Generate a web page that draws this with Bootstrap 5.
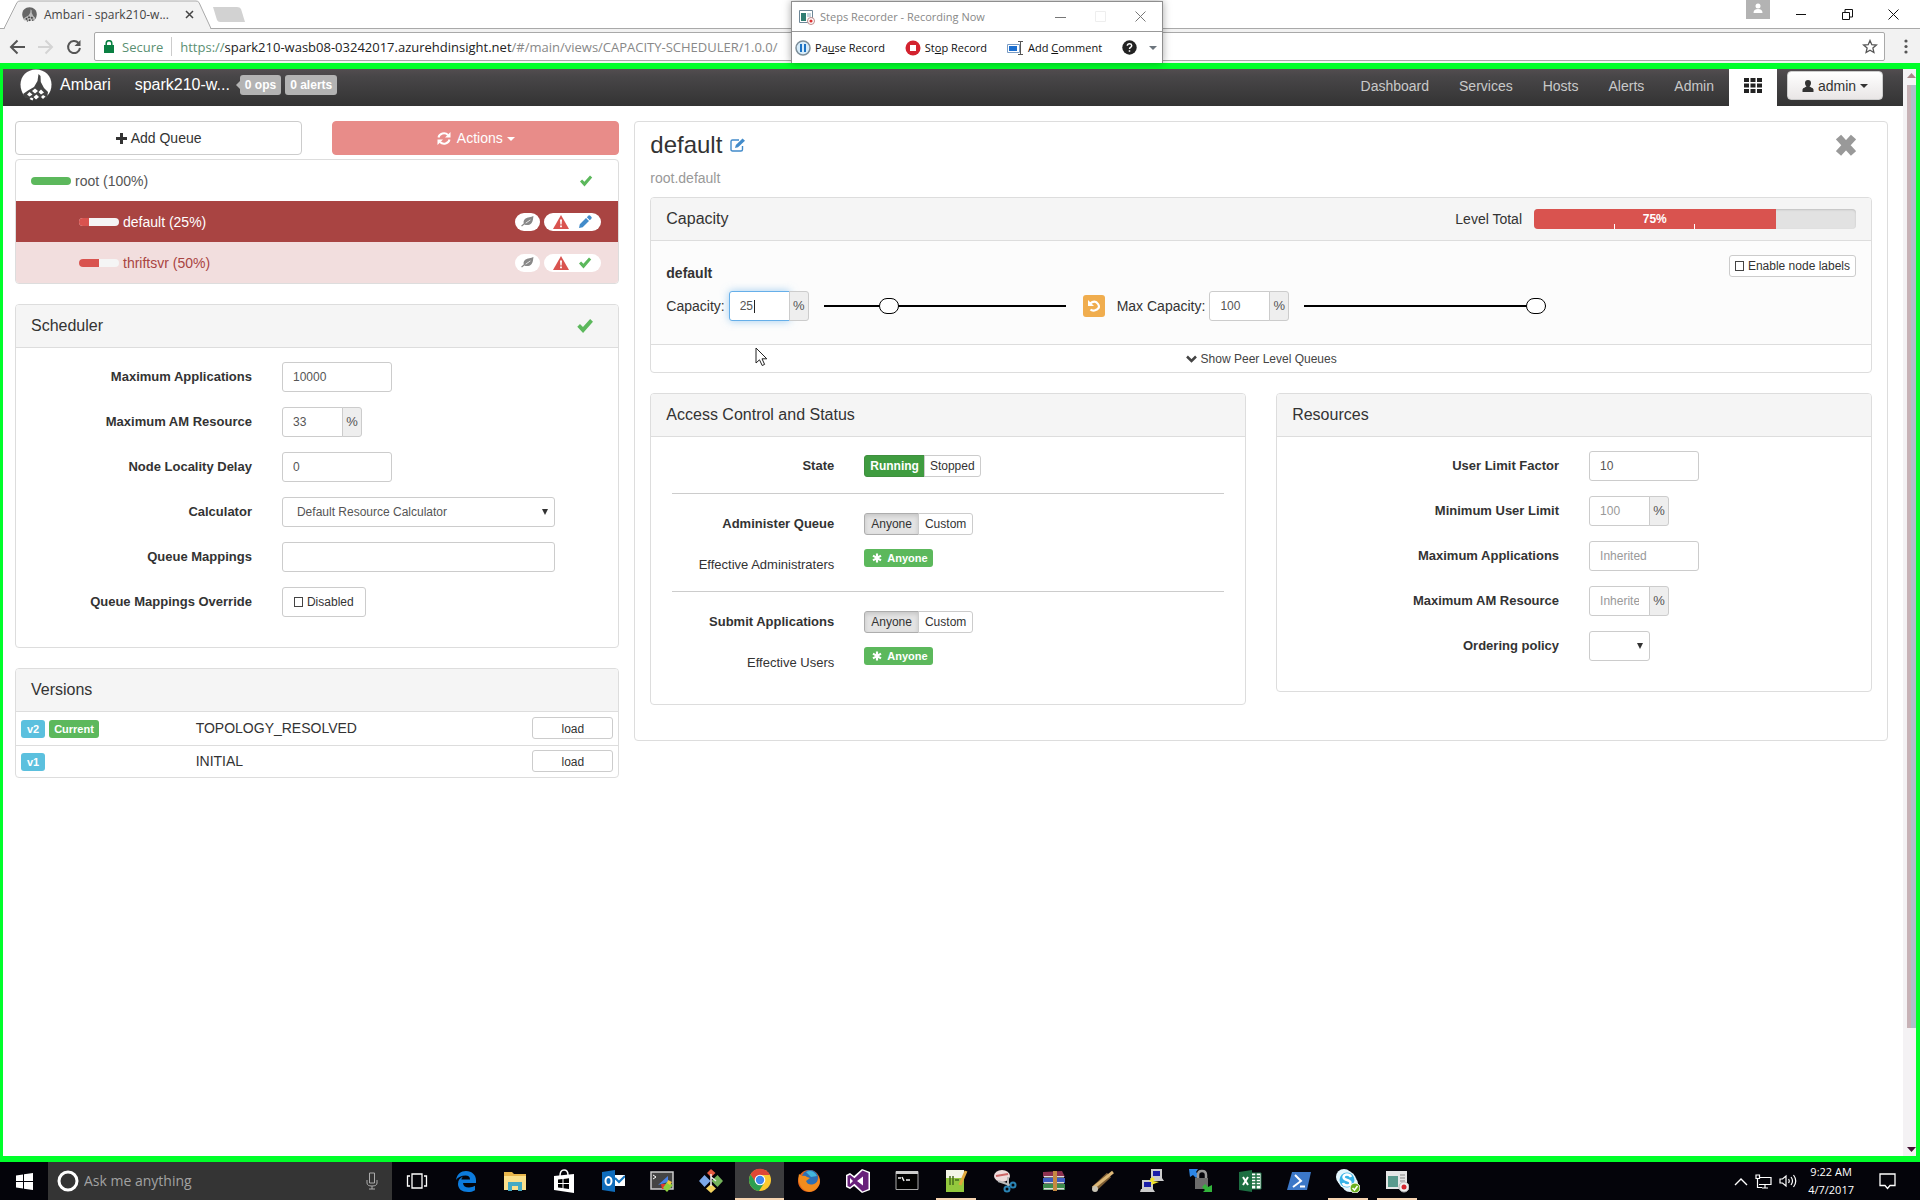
<!DOCTYPE html>
<html lang="en">
<head>
<meta charset="utf-8">
<meta name="viewport" content="width=device-width, initial-scale=1">
<title>Ambari - Capacity Scheduler</title>
<link href="https://cdn.jsdelivr.net/npm/bootstrap@5.3.0/dist/css/bootstrap.min.css" rel="stylesheet">
<style>
body{font-family:"Liberation Sans",Arial,sans-serif;font-size:14px;line-height:20px;color:#333;background:#fff}
button,input,select{font-family:inherit}
.ui-font{font-family:"Open Sans","Noto Sans",sans-serif}
svg{display:block;flex:none}
.ic{width:14px;height:14px;fill:currentColor}
/* browser chrome */
.tabstrip{height:29px;border-bottom:1px solid #a9a9a9;background:#fff}
.tab-one{width:212px;height:29px;margin-bottom:-1px;padding:0 18px 0 22px;gap:7px;font-size:12px;color:#444}
.tab-shape{position:absolute;inset:0;z-index:0}
.tab-one>*:not(.tab-shape){position:relative}
.plain{border:0;background:none;padding:0;color:inherit;display:flex;align-items:center;justify-content:center}
.winbtn{width:46px;height:28px;color:#111}
.toolbar{height:34px;background:#f2f2f2;padding:3px 8px 2px 9px;gap:11px}
.omni{height:29px;border:1px solid #a9a9a9;background:#fff;padding:0 6px 0 9px;gap:8px;border-radius:2px}
.url-txt{font-size:13px;color:#888;white-space:nowrap}
.url-txt b{font-weight:400;color:#222}
.url-txt i{font-style:normal;color:#5a8f72}
.recorder{position:absolute;top:1px;left:41.2%;width:372px;height:62px;background:#fff;border:1px solid #8e8e8e;border-bottom:0;box-shadow:0 0 8px rgba(0,0,0,.35);z-index:10;font-size:11px}
.rec-title{height:30px;border-bottom:1px solid #999;color:#888;padding:0 8px 0 7px;gap:5px}
.rec-tools{height:31px;padding:0 5px 0 3px;color:#111}
.rec-tools .plain{gap:4px}
/* recorded area */
.frame-live{border:solid #00ff2a;border-width:6px 4px 6px 3px;flex:1 1 auto}
.sbar{width:13px;background:#f4f2f4;padding:4px 0}
.sthumb{flex:0 1 943px;margin:7px 0 0 4px;width:9px;background:linear-gradient(90deg,#c7b2b6 0 40%,#aebfca 40% 100%)}
/* page nav */
.topnav{height:37px;background:linear-gradient(#534d50,#484648 20%,#333);color:#fff;padding:0 20px 0 17px}
.brand-txt{font-size:16px;color:#fff;text-decoration:none}
.tagx{height:20px;line-height:20px;padding:0 5px;border-radius:3px;background:#b3b3b3;color:#fff;font-weight:700;font-size:12px;text-decoration:none}
.tag-arrow{position:relative;margin-left:10px}
.tag-arrow::before{content:"";position:absolute;left:-4px;top:5px;border:solid transparent;border-width:5px 5px 5px 0;border-right-color:#b3b3b3}
.topnav .nav-link{padding:0 15px;color:#c9c9c9;line-height:34px}
.gridbox{width:48px;height:37px;background:#fff;color:#222}
.btn-admin{height:29px;width:96px;border-radius:4px;border:1px solid #ccc;background:linear-gradient(#fff,#e9e6e6);color:#333;gap:4px;margin:2px 0 0 10px}
.caretx{border:solid transparent;border-width:4px 4px 0;border-top-color:currentColor;display:inline-block}
/* layout */
.page-grid{display:grid;grid-template-columns:604fr 1253fr;gap:15px;padding:15px 15px 20px 12px;align-items:start}
.pair{gap:30px}
.btn-x{height:34px;border:1px solid #ccc;border-radius:4px;background:#fff;color:#333;display:flex;align-items:center;justify-content:center;gap:4px}
.btn-red{background:#e88c89;border-color:#e88c89;color:#fff;gap:6px}
.queues{border:1px solid #ddd;border-radius:4px;overflow:hidden;margin:4px 0 20px}
.queue{height:41px;padding:0 17px 0 15px;gap:4px;color:#555;text-decoration:none}
.queue+.queue{padding-left:63px}
.queue.q-sel{background:#a94442;color:#fff}
.queue.q-bad{background:#f2dede;color:#a94442}
.qbar{width:40px;height:8px;border-radius:4px;background:#f5f5f5;overflow:hidden}
.qbar span{display:block;height:100%;background:#d9534f}
.qbar .q-full{background:#5cb85c}
.pillx{height:18px;border-radius:9px;background:#fff;padding:0 9px;gap:9px}
.pill-one{padding:0 6px;color:#888}
.t-ok{color:#5cb85c}.t-bad{color:#d9534f}.t-blue{color:#428bca}
.panelx{border:1px solid #ddd;border-radius:4px;background:#fff}
.panelx+.panelx{margin-top:20px}
.phead{height:43px;background:#f5f5f5;border-bottom:1px solid #ddd;padding:0 15px;border-radius:3px 3px 0 0;display:flex;align-items:center}
.phead h2{font-size:16px;line-height:20px;margin:0;font-weight:400}
.pbody{padding:14px 0 15px}
.frow{margin-bottom:15px;min-height:30px;align-items:center}
.frow>:first-child{padding-right:15px;text-align:right;font-size:13px}
.frow>:last-child{padding:0 15px}
.bold-l{font-weight:700}
.fld{height:30px;border:1px solid #ccc;border-radius:3px;padding:0 10px;font-size:12px;color:#555;background:#fff;width:110px}
.fld::placeholder{color:#999;opacity:1}
.fld-sm{width:61px;border-radius:3px 0 0 3px}
.addon{height:30px;width:20px;margin-left:-1px;border:1px solid #ccc;border-radius:0 3px 3px 0;background:#eee;font-size:13px;color:#555;line-height:28px;text-align:center}
.fld-wide{width:85%}
select.fld{appearance:none;padding-left:14px;background:#fff url("data:image/svg+xml,%3Csvg xmlns='http://www.w3.org/2000/svg' width='6' height='6'%3E%3Cpath d='M0 0h6L3 6z' fill='%23333'/%3E%3C/svg%3E") no-repeat right 6px center}
.fld-pick{width:61px}
.chk{appearance:none;width:9px;height:10px;border:1px solid #444;margin:0;background:#fff}
.btn-chk{border:1px solid #ccc;border-radius:3px;background:#fff;font-size:12px;display:inline-flex;align-items:center;gap:4px;cursor:pointer;height:30px;padding:0 11px}
.chk-low{height:22px;padding:0 5px}
.btn-s{height:22px;padding:0 5px;margin:0 0 0 -1px;border:1px solid #ccc;background:#fff;color:#333;font-size:12px;line-height:20px}
.btn-s:first-child{border-radius:3px 0 0 3px;margin:0}
.btn-s:last-child{border-radius:0 3px 3px 0}
.s-on,.s-on+.btn-s{padding:0 6px}
.s-on{background:#e3e3e3;border-color:#adadad;box-shadow:inset 0 2px 4px rgba(0,0,0,.13)}
.s-run{background:#3f9c40;border-color:#3f8f3f;color:#fff;font-weight:700}
.lab{display:inline-flex;align-items:center;height:18px;border-radius:3px;color:#fff;font-weight:700;font-size:11px;padding:0 5px;gap:5px}
.lab-ok{background:#5cb85c}.lab-info{background:#5bc0de;padding:0 6px}
.ver-table{width:100%;border-collapse:collapse}
.ver-table td{height:33px;padding:0 5px}
.ver-table tr+tr td{border-top:1px solid #ddd;height:32px}
.ver-tag{width:29%}
.btn-load{width:81px;height:22px;border:1px solid #ccc;border-radius:3px;background:#fff;color:#333;font-size:12px;line-height:20px;display:inline-block;vertical-align:middle}
/* right side */
.detail{padding:10px 15px 35px}
.detail h1{font-size:24px;line-height:26px;margin:0;font-weight:400}
.sub-l{color:#999;margin:10px 0 9px}
.lvl{width:322px;height:20px;border-radius:4px;background:#e2e2e2;overflow:hidden;box-shadow:inset 0 1px 2px rgba(0,0,0,.15)}
.lvl-fill{height:100%;background:linear-gradient(#fff,#fff) 33.3% 100%/1px 5px no-repeat,linear-gradient(#fff,#fff) 66.6% 100%/1px 5px no-repeat,#d9534f;color:#fff;font-weight:700;font-size:12px;text-align:center}
.capbody{background:#fcfcfc;padding:14px 15px 23px}
.capfoot{height:28px;border-top:1px solid #ddd;font-size:12px;color:#444}
.capfoot .plain{gap:4px}
.cur-fld{position:relative}
.cur-fld input{border-color:#66afe9;box-shadow:0 0 8px rgba(102,175,233,.6)}
.cur-fld::after{content:"";position:absolute;left:25px;top:9px;width:1px;height:13px;background:#222}
.rng{appearance:none;width:242px;height:18px;background:none;margin:0 17px 0 15px}
.rng::-webkit-slider-runnable-track{height:2px;background:#000}
.rng::-webkit-slider-thumb{appearance:none;width:20px;height:16px;margin-top:-7px;border:1px solid #000;border-radius:8px;background:#fff}
.btn-undo{width:22px;height:22px;border-radius:3px;background:#f0ad4e;color:#fff}
.two{display:grid;grid-template-columns:1fr 1fr;gap:30px;margin-top:20px;align-items:start}
.two .panelx{margin:0}
.two hr{margin:12px 21px 15px;border:0;border-top:1px solid #ccc;opacity:1}
.acc .frow{margin-bottom:0}
.acc .eff{margin:10px 0 16px;min-height:26px;align-items:start}
.acc .eff>:first-child{padding-top:6px}
.mouse{position:absolute;left:104px;top:149px;z-index:5}
/* taskbar */
.taskbar{height:38px;background:#04040a;color:#fff}
.start{width:48px;height:38px}
.searchx{width:344px;height:38px;background:#343434;padding:0 14px 0 9px;gap:5px}
.searchx input{background:none;border:0;outline:0;color:#fff;font-size:14px;padding:0}
.searchx input::placeholder{color:#a2a2a2}
.tk{width:49px;height:38px;border:0;background:none;padding:0;display:flex;align-items:center;justify-content:center}
.tk svg{width:24px;height:24px}
.tk-act{background:#3c3c3e;border-bottom:2px solid #f5d3b0}
.tk-open{background:linear-gradient(#f5d3b0,#f5d3b0) 50% 100%/40px 2px no-repeat}
.tray{gap:7px}
.clock{font-size:11px;line-height:18px;text-align:center;margin:0 18px 0 4px}
</style>
</head>
<body class="d-flex flex-column min-vh-100 position-relative">
<svg width="0" height="0" class="position-absolute" aria-hidden="true">
<symbol id="ok" viewBox="0 0 14 14"><path d="M1 7.600 3.100 5.400 5.400 7.800 11 1.600 13.200 3.600 5.500 12.400z"/></symbol>
<symbol id="warn" viewBox="0 0 16 14"><path d="M8 0 16 14H0z"/><path fill="#fff" d="M7 4.500h2l-.4 5H7.400zM7.100 10.500h1.800v1.800H7.100z"/></symbol>
<symbol id="pencil" viewBox="0 0 14 14"><path d="M1 13 1.800 9.300 8 3 11 6 4.700 12.200zM8.800 2.200 10.500.5Q11.200 0 12 .6L13.500 2Q14 2.800 13.500 3.500L11.800 5.200z"/></symbol>
<symbol id="leaf" viewBox="0 0 14 12"><path d="M13.500 0C11 1.500 7 1 4.500 3 2.500 4.600 2.500 7 3 8L0 10.500l1 1L3.600 9.300C6 10.500 9.500 10 11.500 7.500 13.300 5 13 2.500 13.500 0zM4.800 7.600 10 3.800 10.400 4.300 5.200 8.100z" fill-rule="evenodd"/></symbol>
<symbol id="star6" viewBox="0 0 12 12"><g stroke="currentColor" stroke-width="2.600"><path d="M6 .5v11M1.200 3.200l9.600 5.600M10.800 3.200 1.200 8.800"/></g></symbol>
<symbol id="ambari" viewBox="0 0 32 32"><path d="M16 .5C25 .5 31.500 7 31.500 15.500 31.500 20 30 24 27.500 26.500L4 26.500C2 23.500.5 20 .5 15.500.5 7 7 .5 16 .5z"/><path fill="var(--cut,#444)" d="M18.500 5 20.500 7 20.800 13 24 19 28 23 27 29H5L3 25 8 21.500 14 18 17.500 12z"/><path fill="currentColor" d="M15 19.500l3 2.500-3 2.500-3-2.500zM21 20.500l3 3-3 2-2.500-2.500zM9.500 23l3 2.500-3 2L7 25.500zM16.500 25.500l2.500 2.500-3 2.500-2.500-2.500zM23 26l2.500 1.500L23 30l-2-2zM11 28.500l2.500 1-1 2-3-1.500z"/></symbol>
</svg>

<header class="ui-font">
  <div class="tabstrip d-flex align-items-center">
    <div class="tab-one d-flex align-items-center position-relative">
      <svg class="tab-shape" width="212" height="29"><path d="M4 28.500 17 2.500Q18 1 20 1H196Q198 1 199 2.500L211 28.500" fill="#f2f2f2" stroke="#a9a9a9"/><path d="M5 29H210" stroke="#f2f2f2" stroke-width="2"/></svg>
      <svg width="15" height="15" fill="#666" style="--cut:#bbb"><use href="#ambari"/></svg>
      <span class="flex-grow-1 text-nowrap">Ambari - spark210-w...</span>
      <button class="plain" aria-label="Close tab"><svg width="9" height="9" stroke="#444" stroke-width="1.500"><path d="M1 1l7 7M8 1l-7 7"/></svg></button>
    </div>
    <button class="plain" aria-label="New tab"><svg width="34" height="17"><path d="M1 1H25Q28 1 29 3L33 16H8Q6 16 5 14z" fill="#d2d2d2"/></svg></button>
    <div class="ms-auto d-flex align-items-start align-self-start pe-1">
      <span class="me-2"><svg width="24" height="19"><path fill="#b3b3b3" d="M0 0h24v19H0z"/><circle cx="12" cy="6" r="2.500" fill="#fff"/><path d="M7.500 13q0-4 4.500-4t4.500 4z" fill="#fff"/></svg></span>
      <button class="plain winbtn" aria-label="Minimize"><svg width="10" height="10" stroke="currentColor"><path d="M0 5.500h10"/></svg></button>
      <button class="plain winbtn" aria-label="Restore"><svg width="11" height="11" fill="none" stroke="currentColor"><path d="M.5 3.500h7v7h-7zM3 3V.500h7.500V8H8"/></svg></button>
      <button class="plain winbtn" aria-label="Close"><svg width="11" height="11" stroke="currentColor"><path d="M.5.5l10 10M10.500.5l-10 10"/></svg></button>
    </div>
  </div>
  <div class="toolbar d-flex align-items-center">
    <button class="plain" aria-label="Back"><svg width="17" height="16" fill="none" stroke="#555" stroke-width="2"><path d="M16 8H2M8.500 1.500 2 8l6.500 6.500"/></svg></button>
    <button class="plain" aria-label="Forward"><svg width="17" height="16" fill="none" stroke="#d4d4d4" stroke-width="2"><path d="M1 8h14M8.500 1.500 15 8l-6.500 6.500"/></svg></button>
    <button class="plain" aria-label="Reload"><svg width="18" height="16" fill="none" stroke="#555" stroke-width="2"><path d="M13.500 4A6 6 0 1 0 15 9"/><path d="M15.500 1v6h-6z" fill="#555" stroke="none"/></svg></button>
    <div class="omni d-flex align-items-center flex-grow-1">
      <svg width="10" height="13" fill="#0b8043"><path d="M0 5h10v8H0z"/><path d="M2.200 6V3.500a2.800 2.800 0 0 1 5.600 0V6" fill="none" stroke="#0b8043" stroke-width="1.500"/></svg>
      <span class="url-txt"><i>Secure</i></span>
      <span class="vr my-1"></span>
      <span class="url-txt flex-grow-1"><i>https://</i><b>spark210-wasb08-03242017.azurehdinsight.net</b>/#/main/views/CAPACITY-SCHEDULER/1.0.0/</span>
      <button class="plain" aria-label="Bookmark"><svg width="16" height="15" fill="none" stroke="#555" stroke-width="1.300"><path d="M8 1.500l1.800 4.200 4.600.4-3.500 3 1 4.400L8 11.200l-3.900 2.300 1-4.400-3.500-3 4.600-.4z"/></svg></button>
    </div>
    <button class="plain ms-1 px-1" aria-label="Menu"><svg width="4" height="15" fill="#555"><circle cx="2" cy="2" r="1.600"/><circle cx="2" cy="7.500" r="1.600"/><circle cx="2" cy="13" r="1.600"/></svg></button>
  </div>
  <section class="recorder" aria-label="Steps Recorder">
    <div class="rec-title d-flex align-items-center">
      <svg width="16" height="16"><path fill="#fff" stroke="#6e8797" d="M.5 1.500h13v12H.5z"/><path fill="#2f7d72" d="M2 4h5v8H2z"/><path stroke="#8ab" d="M8 5h4M8 7h4"/><circle cx="12" cy="12" r="3.500" fill="#fff" stroke="#b88"/><circle cx="12" cy="12" r="1.600" fill="#d33"/></svg>
      <span class="flex-grow-1">Steps Recorder - Recording Now</span>
      <button class="plain me-2" aria-label="Minimize"><svg width="11" height="11" stroke="#777"><path d="M0 6.500h11"/></svg></button>
      <button class="plain mx-3" aria-label="Maximize" disabled><svg width="11" height="11" fill="none" stroke="#eee"><path d="M.5.5h10v10H.5z"/></svg></button>
      <button class="plain ms-2 me-2" aria-label="Close"><svg width="11" height="11" stroke="#777"><path d="M.5.5l10 10M10.500.5l-10 10"/></svg></button>
    </div>
    <div class="rec-tools d-flex align-items-center justify-content-between">
      <button class="plain"><svg width="16" height="16"><circle cx="8" cy="8" r="7" fill="#d6ecfa" stroke="#7d8e99" stroke-width="1.500"/><path fill="#1c73c4" d="M5 4h2v8H5zM9 4h2v8H9z"/></svg><span>Pa<u>u</u>se Record</span></button>
      <button class="plain"><svg width="16" height="16"><circle cx="8" cy="8" r="7.500" fill="#d3232f"/><path fill="#fff" d="M5 5h6v6H5z"/></svg><span>St<u>o</u>p Record</span></button>
      <button class="plain"><svg width="17" height="14"><path fill="#fff" stroke="#7a9cc4" d="M.5 3.500h12v8H.5z"/><path fill="#1c6fd0" d="M2 5h8v5H2z"/><path fill="none" stroke="#555" d="M11 .5h5M13.500.5v13M11 13.500h5"/></svg><span>Add <u>C</u>omment</span></button>
      <button class="plain" aria-label="Help"><svg width="15" height="15"><circle cx="7.500" cy="7.500" r="7.200" fill="#222"/><path d="M5.300 5.700q.2-2 2.200-2t2.200 1.800q0 1.200-1.200 1.800-1 .6-1 1.700M7.500 10.300v1.500" fill="none" stroke="#fff" stroke-width="1.500"/></svg><span class="caretx ms-2 text-secondary"></span></button>
    </div>
  </section>
</header>

<div class="frame-live d-flex">
<div class="flex-grow-1">
  <nav class="topnav d-flex align-items-start justify-content-between">
    <div class="d-flex align-items-center">
      <svg width="32" height="32" fill="#fff"><use href="#ambari"/></svg>
      <a class="brand-txt ms-2" href="#">Ambari</a>
      <a class="brand-txt ms-4" href="#">spark210-w...</a>
      <a class="tagx tag-arrow" href="#">0 ops</a>
      <a class="tagx ms-1" href="#">0 alerts</a>
    </div>
    <div class="d-flex align-items-start">
      <a class="nav-link" href="#">Dashboard</a><a class="nav-link" href="#">Services</a><a class="nav-link" href="#">Hosts</a><a class="nav-link" href="#">Alerts</a><a class="nav-link" href="#">Admin</a>
      <button class="plain gridbox pb-1" aria-label="Views"><svg width="18" height="15" fill="currentColor"><path d="M0 0h5v4H0zM6.500 0h5v4h-5zM13 0h5v4h-5zM0 5.500h5v4H0zM6.500 5.500h5v4h-5zM13 5.500h5v4h-5zM0 11h5v4H0zM6.500 11h5v4h-5zM13 11h5v4h-5z"/></svg></button>
      <button class="plain btn-admin"><svg width="12" height="12" fill="currentColor"><path d="M6 0a3 3 0 0 1 3 3c0 2-1 3-1.500 3.500 1 1 3.500 1 4 3V12H.5V9.500c.5-2 3-2 4-3C4 6 3 5 3 3a3 3 0 0 1 3-3z"/></svg>admin<span class="caretx"></span></button>
    </div>
  </nav>

  <main class="page-grid">
    <div>
      <div class="d-flex pair">
        <button class="btn-x flex-fill w-50"><svg width="11" height="11" stroke="currentColor" stroke-width="3"><path d="M5.500 0v11M0 5.500h11"/></svg>Add Queue</button>
        <button class="btn-x btn-red flex-fill w-50"><svg width="14" height="13" fill="none" stroke="currentColor" stroke-width="2"><path d="M1.500 5.500A5.500 5 0 0 1 11 3M12.500 7.500A5.500 5 0 0 1 3 10"/><path fill="currentColor" stroke="none" d="M13.500 0v5.500H8zM.5 13V7.500H6z"/></svg><span>Actions <span class="caretx align-middle"></span></span></button>
      </div>
      <div class="queues">
        <a class="queue d-flex align-items-center" href="#"><span class="qbar"><span class="q-full" style="width:100%"></span></span>root (100%)<svg class="ic t-ok ms-auto me-2"><use href="#ok"/></svg></a>
        <a class="queue q-sel d-flex align-items-center" href="#"><span class="qbar"><span style="width:25%"></span></span>default (25%)<span class="pillx pill-one d-flex align-items-center ms-auto"><svg width="13" height="11" fill="currentColor"><use href="#leaf"/></svg></span><span class="pillx d-flex align-items-center"><svg class="t-bad" width="16" height="14" fill="currentColor"><use href="#warn"/></svg><svg class="ic t-blue"><use href="#pencil"/></svg></span></a>
        <a class="queue q-bad d-flex align-items-center" href="#"><span class="qbar"><span style="width:50%"></span></span>thriftsvr (50%)<span class="pillx pill-one d-flex align-items-center ms-auto"><svg width="13" height="11" fill="currentColor"><use href="#leaf"/></svg></span><span class="pillx d-flex align-items-center"><svg class="t-bad" width="16" height="14" fill="currentColor"><use href="#warn"/></svg><svg class="ic t-ok"><use href="#ok"/></svg></span></a>
      </div>

      <section class="panelx">
        <div class="phead justify-content-between"><h2>Scheduler</h2><svg class="t-ok me-2" width="20" height="18" fill="currentColor"><use href="#ok"/></svg></div>
        <form class="pbody">
          <div class="row g-0 frow"><label class="col-5 bold-l" for="ma">Maximum Applications</label><div class="col-7"><input id="ma" class="fld d-block" value="10000"></div></div>
          <div class="row g-0 frow"><label class="col-5 bold-l" for="mr">Maximum AM Resource</label><div class="col-7 d-flex"><input id="mr" class="fld fld-sm" value="33"><span class="addon">%</span></div></div>
          <div class="row g-0 frow"><label class="col-5 bold-l" for="nd">Node Locality Delay</label><div class="col-7"><input id="nd" class="fld d-block" value="0"></div></div>
          <div class="row g-0 frow"><label class="col-5 bold-l" for="ca">Calculator</label><div class="col-7"><select id="ca" class="fld fld-wide d-block"><option>Default Resource Calculator</option></select></div></div>
          <div class="row g-0 frow"><label class="col-5 bold-l" for="qm">Queue Mappings</label><div class="col-7"><input id="qm" class="fld fld-wide d-block"></div></div>
          <div class="row g-0 frow"><span class="col-5 bold-l">Queue Mappings Override</span><div class="col-7 d-flex"><label class="btn-chk"><input type="checkbox" class="chk">Disabled</label></div></div>
        </form>
      </section>

      <section class="panelx">
        <div class="phead"><h2>Versions</h2></div>
        <table class="ver-table">
          <tr><td class="ver-tag"><span class="lab lab-info">v2</span> <span class="lab lab-ok">Current</span></td><td>TOPOLOGY_RESOLVED</td><td class="text-end"><button class="btn-load">load</button></td></tr>
          <tr><td><span class="lab lab-info">v1</span></td><td>INITIAL</td><td class="text-end"><button class="btn-load">load</button></td></tr>
        </table>
      </section>
    </div>

    <section class="panelx detail">
      <div class="d-flex justify-content-between align-items-center">
        <h1 class="d-flex align-items-center gap-2">default <svg class="t-blue" width="16" height="14" fill="none" stroke="currentColor" stroke-width="1.400"><path d="M12.500 8v3.500q0 1.500-1.500 1.500H2.500Q1 13 1 11.500v-8Q1 2 2.500 2H9"/><path fill="currentColor" stroke="none" d="M5 10l.8-3L12.500.5l2.500 2.300L8 9.200z"/></svg></h1>
        <button class="plain me-3" aria-label="Close queue"><svg width="20" height="24" stroke="#999" stroke-width="7"><path d="M2.500 4l15 16.500M17.500 4l-15 16.500"/></svg></button>
      </div>
      <p class="sub-l">root.default</p>

      <div class="panelx position-relative">
        <div class="phead"><h2 class="flex-grow-1">Capacity</h2><span class="me-2 pe-1">Level Total</span><div class="lvl"><div class="lvl-fill" style="width:75%">75%</div></div></div>
        <div class="capbody">
          <div class="d-flex justify-content-between align-items-start"><span class="bold-l pt-2">default</span><label class="btn-chk chk-low"><input type="checkbox" class="chk">Enable node labels</label></div>
          <div class="d-flex align-items-center mt-2">
            <label for="cap" class="me-1">Capacity:</label><span class="cur-fld d-flex"><input id="cap" class="fld fld-sm" value="25"><span class="addon">%</span></span>
            <input type="range" class="rng" value="25" aria-label="Capacity">
            <button class="plain btn-undo" aria-label="Undo"><svg width="12" height="12" fill="none" stroke="currentColor" stroke-width="2.200"><path d="M2 3.500Q7-.5 10 4T6.500 10.500Q4 11 2.500 9.500"/><path fill="currentColor" stroke="none" d="M0 0v6h6z"/></svg></button>
            <label for="mcap" class="me-1 ms-2 ps-1">Max Capacity:</label><span class="d-flex"><input id="mcap" class="fld fld-sm" value="100"><span class="addon">%</span></span>
            <input type="range" class="rng" value="100" aria-label="Max capacity">
          </div>
        </div>
        <div class="capfoot d-flex justify-content-center"><button class="plain"><svg width="11" height="8" fill="none" stroke="currentColor" stroke-width="2.500"><path d="M1 1.500 5.500 6 10 1.500"/></svg>Show Peer Level Queues</button></div>
        <svg class="mouse" width="14" height="20"><path d="M1 1v15l3.500-3.200 2.700 5.700 2.400-1.100L7 11.800h4.800z" fill="#fff" stroke="#222"/></svg>
      </div>

      <div class="two">
        <section class="panelx">
          <div class="phead"><h2>Access Control and Status</h2></div>
          <div class="pbody acc">
            <div class="row g-0 frow"><span class="col-4 bold-l">State</span><div class="col-8 d-flex"><button class="btn-s s-run">Running</button><button class="btn-s">Stopped</button></div></div>
            <hr>
            <div class="row g-0 frow"><span class="col-4 bold-l">Administer Queue</span><div class="col-8 d-flex"><button class="btn-s s-on">Anyone</button><button class="btn-s">Custom</button></div></div>
            <div class="row g-0 frow eff"><span class="col-4">Effective Administraters</span><div class="col-8 d-flex"><span class="lab lab-ok ps-2"><svg width="10" height="10"><use href="#star6"/></svg>Anyone</span></div></div>
            <hr>
            <div class="row g-0 frow"><span class="col-4 bold-l">Submit Applications</span><div class="col-8 d-flex"><button class="btn-s s-on">Anyone</button><button class="btn-s">Custom</button></div></div>
            <div class="row g-0 frow eff"><span class="col-4">Effective Users</span><div class="col-8 d-flex"><span class="lab lab-ok ps-2"><svg width="10" height="10"><use href="#star6"/></svg>Anyone</span></div></div>
          </div>
        </section>
        <section class="panelx">
          <div class="phead"><h2>Resources</h2></div>
          <form class="pbody">
            <div class="row g-0 frow"><label class="col-6 bold-l" for="ulf">User Limit Factor</label><div class="col-6"><input id="ulf" class="fld d-block" value="10"></div></div>
            <div class="row g-0 frow"><label class="col-6 bold-l" for="mul">Minimum User Limit</label><div class="col-6 d-flex"><input id="mul" class="fld fld-sm" placeholder="100"><span class="addon">%</span></div></div>
            <div class="row g-0 frow"><label class="col-6 bold-l" for="rma">Maximum Applications</label><div class="col-6"><input id="rma" class="fld d-block" placeholder="Inherited"></div></div>
            <div class="row g-0 frow"><label class="col-6 bold-l" for="rmr">Maximum AM Resource</label><div class="col-6 d-flex"><input id="rmr" class="fld fld-sm" placeholder="Inherited"><span class="addon">%</span></div></div>
            <div class="row g-0 frow"><label class="col-6 bold-l" for="op">Ordering policy</label><div class="col-6"><select id="op" class="fld fld-pick d-block"><option></option></select></div></div>
          </form>
        </section>
      </div>
    </section>
  </main>
</div>
<div class="sbar d-flex flex-column align-items-end" aria-hidden="true">
  <svg width="9" height="5" fill="#a88"><path d="M0 5 4.500 0 9 5z"/></svg>
  <div class="sthumb"></div>
  <svg class="mt-auto" width="9" height="5" fill="#413"><path d="M0 0h9L4.500 5z"/></svg>
</div>
</div>

<footer class="taskbar d-flex align-items-center ui-font">
  <button class="plain start" aria-label="Start"><svg width="17" height="17" fill="#fff"><path d="M0 2.500 7 1.500V8H0zM8 1.300 17 0v8H8zM0 9h7v6.500L0 14.500zM8 9h9v8L8 15.700z"/></svg></button>
  <div class="searchx d-flex align-items-center">
    <svg width="22" height="22" fill="none" stroke="#fff" stroke-width="3"><circle cx="11" cy="11" r="9"/></svg>
    <input type="text" class="flex-grow-1" placeholder="Ask me anything" aria-label="Search">
    <svg width="12" height="18" fill="none" stroke="#aaa"><path d="M3.500 1h5v10h-5zM1 8v3q0 3 5 3t5-3V8M6 14v3M3 17h6"/></svg>
  </div>
  <button class="tk" aria-label="Task View"><svg viewBox="0 0 24 24" fill="none" stroke="#fff" stroke-width="1.300"><path d="M7 5h10v14H7zM5 7H2.500v10H5M19 7h2.500v10H19"/></svg></button>
  <button class="tk" aria-label="Edge"><svg viewBox="0 0 24 24"><path fill="#0c7bdc" d="M2 11C3 5 7 2 12 2c6 0 10 4 10 9v3H9c.2 3 2.500 4.500 6 4.500 2.200 0 4-.5 6-1.700v4.400C19 22.500 16.500 23 14 23c-6 0-10-3-10-8 0-4 2-6 5-7.500-1 1-1.500 2-1.600 3H16c0-2.500-1.500-4-4.500-4C7.500 6.500 4 8 2 11z"/></svg></button>
  <button class="tk" aria-label="File Explorer"><svg viewBox="0 0 24 24"><path fill="#e8b64c" d="M1 3h8l2 2h12v15H1z"/><path fill="#fbe08c" d="M1 7h22v14H1z"/><path fill="#45aac4" d="M5 13h14v9h-4v-5H9v5H5z"/></svg></button>
  <button class="tk" aria-label="Store"><svg viewBox="0 0 24 24"><path fill="none" stroke="#fff" stroke-width="1.500" d="M8 7q0-6 4-6t4 5"/><path fill="#fff" d="M2 7l20-2v19L2 21z"/><path fill="#000" d="M6 10.500l4.500-.5v4H6zM11.500 10 17 9.300V14h-5.500zM6 15h4.500v4L6 18.500zM11.500 15H17v5l-5.500-.8z"/></svg></button>
  <button class="tk" aria-label="Outlook"><svg viewBox="0 0 24 24"><path fill="#fff" d="M12 6h12v11H12z"/><path fill="none" stroke="#1473bf" stroke-width="2" d="M14 9l4 4 6-6"/><path fill="#0f6cbb" d="M1 3 14 1v22L1 21z"/><ellipse cx="7.500" cy="12" rx="3" ry="4" fill="none" stroke="#fff" stroke-width="2"/></svg></button>
  <button class="tk" aria-label="Console"><svg viewBox="0 0 24 24"><path fill="#444" stroke="#ccc" stroke-width="1.500" d="M1 3h22v17H1z"/><path stroke="#fff" d="M3 6l3 2-3 2" fill="none"/><path fill="#4a83e8" d="M8 16 18 7v6z"/><path fill="#e33b2e" d="M11 15h6v5h-5z"/><path fill="#8ed13f" d="M17 13l6 3-6 7-4-4z"/><path fill="#f3c93b" d="M18 11l4 2-2 3-3-2z"/></svg></button>
  <button class="tk" aria-label="Git"><svg viewBox="0 0 24 24"><path fill="#e55c42" d="M12 0l4.500 4L12 8 8 4z"/><path fill="#7ba7e8" d="M5.500 6 11.500 12l-6 6L0 12z"/><path fill="#73b35a" d="M18.500 6 24 12l-5.500 6-6-6z"/><path fill="#f4d35e" d="M12 15l5 4.500L12 24l-5-4.500z"/><path stroke="#eee" stroke-width="1.500" d="M12 5v12M12 8l5 4"/></svg></button>
  <button class="tk tk-act" aria-label="Chrome"><svg viewBox="0 0 24 24"><circle cx="12" cy="12" r="11" fill="#fbc92f"/><path fill="#e04736" d="M2.500 6.500A11 11 0 0 1 22 7H12l-5 7z"/><path fill="#2c9f50" d="M2.500 6.500A11 11 0 0 0 11 23l5.500-8.500H8z"/><circle cx="12" cy="12" r="5.300" fill="#fff"/><circle cx="12" cy="12" r="4.200" fill="#3f86ee"/></svg></button>
  <button class="tk" aria-label="Firefox"><svg viewBox="0 0 24 24"><circle cx="12" cy="12" r="11" fill="#e8641b"/><circle cx="13" cy="9" r="8" fill="#2d6fb5"/><path fill="#43b6dc" d="M9 3q7-3 11 4l-6 1z"/><path fill="#f28c1e" d="M2 5l3 2q3-1 5 1l3 1-4 3q2 5 8 3 5-2 4-8 4 7-1 12-7 7-14 1Q0 14 2 5z"/></svg></button>
  <button class="tk" aria-label="Visual Studio"><svg viewBox="0 0 24 24"><path fill="#fff" d="M16 0l8 3v18l-8 3-8-7-4 3-4-2V6l4-2 4 3z"/><path fill="#68217a" d="M16.500 1.500 22.500 4v16l-6 2.500-8-7.800-4.500 3.500L1.500 17V7L4 5.800l4.500 3.500zM17 7.500 11 12l6 4.500zM4 9v6l3-3z" fill-rule="evenodd"/></svg></button>
  <button class="tk" aria-label="Command Prompt"><svg viewBox="0 0 24 24"><path fill="#000" stroke="#aaa" d="M1 2.500h22v18H1z"/><path fill="#ccc" d="M1 2h22v3H1z"/><path stroke="#eee" stroke-width="1.500" d="M3 9h3M7 8l2 4M11 11h4"/></svg></button>
  <button class="tk tk-open" aria-label="Notepad++"><svg viewBox="0 0 24 24"><path fill="#f3f5e6" d="M2 1h18v22H2z"/><path fill="#93c83d" d="M2 9h18v14H2z"/><path fill="none" stroke="#466b1c" stroke-width="1.500" d="M6 7v9M9 7v9M11 11h4"/><path stroke="#e0a93c" stroke-width="3" d="M22 2l-6 14"/></svg></button>
  <button class="tk" aria-label="Snipping Tool"><svg viewBox="0 0 24 24"><ellipse cx="9" cy="7" rx="8" ry="6" fill="#eedcdc"/><path stroke="#c66" stroke-width="2" d="M3 7l12-2"/><path stroke="#bbb" stroke-width="2" d="M5 12l12 4M15 8v9"/><g fill="none" stroke="#2a84b5" stroke-width="2"><circle cx="14" cy="20" r="2.500"/><circle cx="20" cy="16" r="2.500"/></g></svg></button>
  <button class="tk" aria-label="WinRAR"><svg viewBox="0 0 24 24"><path fill="#8d3150" d="M1 3 20 2l3 6H1z"/><path fill="#3c5bc0" d="M1 9h22v5H1z"/><path fill="#3d8c4d" d="M1 15h22v6H1z"/><path fill="#ddd" d="M2 7h20v1.500H2zM2 13h20v1.500H2zM2 19h20v1.500H2z"/><path fill="#c58a42" d="M11 2h4v20h-4z"/></svg></button>
  <button class="tk" aria-label="Telescope"><svg viewBox="0 0 24 24"><path stroke="#7c5c34" stroke-width="6" d="M3 20 18 6"/><path stroke="#dcb777" stroke-width="3" d="M2 19 22 3"/><circle cx="4" cy="20" r="3" fill="#c9c4b5"/></svg></button>
  <button class="tk" aria-label="PuTTY"><svg viewBox="0 0 24 24"><path fill="#ccc" d="M11 0h11v9H11zM2 11h11v9H2zM10 9h12l2 3H12zM1 20h12l2 3H0z"/><path fill="#1a1ea8" d="M13 2h7v5h-7zM4 13h7v5H4z"/><path fill="#f2e52c" d="M12 8l3 2-2 2 6 1-8 3 1-3-3-1z"/></svg></button>
  <button class="tk" aria-label="WinSCP"><svg viewBox="0 0 24 24"><path fill="#2b86e8" d="M0 0h9L7 3l3 3-3 3-3-3-3 2z"/><path fill="none" stroke="#999" stroke-width="2.500" d="M9 10V6q0-4 4-4t4 4v4"/><path fill="#6c6c6c" d="M6 9h13v11H6z"/><path fill="#32b43b" d="M23 23h-9l2-2-3-3 3-3 3 3 4-2z"/></svg></button>
  <button class="tk" aria-label="Excel"><svg viewBox="0 0 24 24"><path fill="#fff" stroke="#217346" d="M12 4h11v16H12z"/><path stroke="#217346" stroke-width="1.500" d="M14 7h8M14 10h8M14 13h8M14 16h8M18 4v16"/><path fill="#1c6f42" d="M1 3 14 1v22L1 21z"/><path stroke="#fff" stroke-width="2" d="M5 8l5 8M10 8l-5 8"/></svg></button>
  <button class="tk" aria-label="PowerShell"><svg viewBox="0 0 24 24"><path fill="#3c78c8" d="M5 3h19l-4 18H0z"/><path fill="none" stroke="#fff" stroke-width="2" d="M8 6l6 6-8 6M13 17.500h5"/></svg></button>
  <button class="tk tk-open" aria-label="Skype"><svg viewBox="0 0 24 24"><circle cx="8" cy="8" r="8" fill="#e4f6fd"/><circle cx="14" cy="15" r="8" fill="#e4f6fd"/><circle cx="11" cy="11" r="9" fill="#e4f6fd"/><circle cx="11" cy="11" r="7.500" fill="#38b3e8"/><path fill="none" stroke="#fff" stroke-width="2.500" d="M15 8q-1-2.500-4-2.500T7.500 8q0 2 3.500 3t3.500 3q0 2.500-3.500 2.500T7 14"/><circle cx="19" cy="19" r="5" fill="#6bb01e" stroke="#fff"/><path fill="none" stroke="#fff" stroke-width="1.500" d="M16.500 19l2 2 3-4"/></svg></button>
  <button class="tk tk-open" aria-label="Steps Recorder"><svg viewBox="0 0 24 24"><path fill="#e6e6e6" d="M1 2h21v18H1z"/><path fill="#5a9a8d" d="M3 7h10v11H3z"/><path stroke="#888" d="M15 6h5M15 9h5M15 12h5"/><circle cx="19" cy="18" r="5" fill="#f0f0f0" stroke="#bbb"/><circle cx="19" cy="18" r="2.500" fill="#d4272f"/></svg></button>
  <div class="ms-auto d-flex align-items-center pe-4 tray">
    <button class="plain" aria-label="Hidden icons"><svg width="14" height="9" fill="none" stroke="#fff" stroke-width="1.400"><path d="M1 8l6-6 6 6"/></svg></button>
    <svg width="17" height="15" fill="none" stroke="#fff" stroke-width="1.200"><path d="M4 3.500h12v7H4M1 1h3.500v3.500H1zM2.500 5v8.500H7M10 11v3M7 14h6"/></svg>
    <svg width="18" height="14" fill="none" stroke="#fff" stroke-width="1.200"><path d="M1 5h2.500L7 2v10L3.500 9H1zM9.500 5q1.500 2 0 4M12 3q3 4 0 8M14.500 1q4.500 6 0 12"/></svg>
    <div class="clock">9:22 AM<br>4/7/2017</div>
    <button class="plain" aria-label="Notifications"><svg width="17" height="17" fill="none" stroke="#fff" stroke-width="1.300"><path d="M1 1h15v11.500h-5L8.500 15.500 6 12.500H1z"/></svg></button>
  </div>
</footer>
<script src="https://cdn.jsdelivr.net/npm/bootstrap@5.3.0/dist/js/bootstrap.bundle.min.js"></script>
</body>
</html>
